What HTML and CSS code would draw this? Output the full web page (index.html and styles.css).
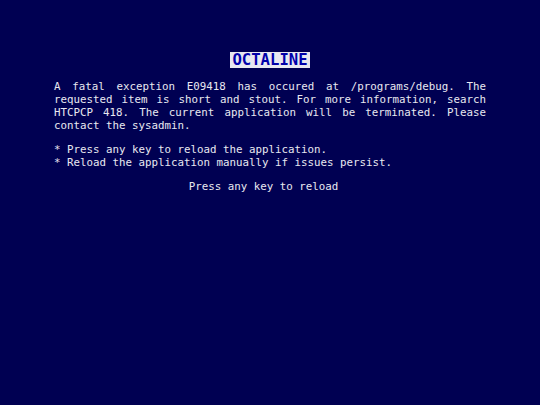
FILE: index.html
```html
<!DOCTYPE html>
<html>
<head>
<meta charset="utf-8">
<link rel="stylesheet" href="styles.css">
</head>
<body>
<main class="screen">
  <div class="title-row"><span class="title">OCTALINE</span></div>
  <p class="message">A fatal exception E09418 has occured at /programs/debug. The requested item is short and stout. For more information, search HTCPCP 418. The current application will be terminated. Please contact the sysadmin.</p>
  <p class="list">* Press any key to reload the application.<br>* Reload the application manually if issues persist.</p>
  <p class="prompt">Press any key to reload<span class="cursor">&nbsp;_</span></p>
</main>
</body>
</html>
```
FILE: styles.css
```css
html, body {
  margin: 0;
  padding: 0;
  background: #000052;
  height: 100%;
}
body {
  font-family: "DejaVu Sans Mono", monospace;
  font-size: 10.8px;
  color: #e8e8f0;
}
.screen {
  width: 80%;
  margin: 0 auto;
  padding-top: 52px;
}
.title-row {
  text-align: center;
  line-height: 16px;
  height: 16px;
}
.title {
  display: inline-block;
  background: #e8e8f0;
  color: #0000aa;
  font-weight: bold;
  font-size: 15.6px;
  line-height: 16px;
  padding: 0 2px;
  vertical-align: top;
}
.message {
  margin: 12px 0 10.8px;
  text-align: justify;
}
.list {
  margin: 10.8px 0;
}
.prompt {
  margin: 10.8px 0;
  text-align: center;
}
.cursor {
  visibility: hidden;
}
```
